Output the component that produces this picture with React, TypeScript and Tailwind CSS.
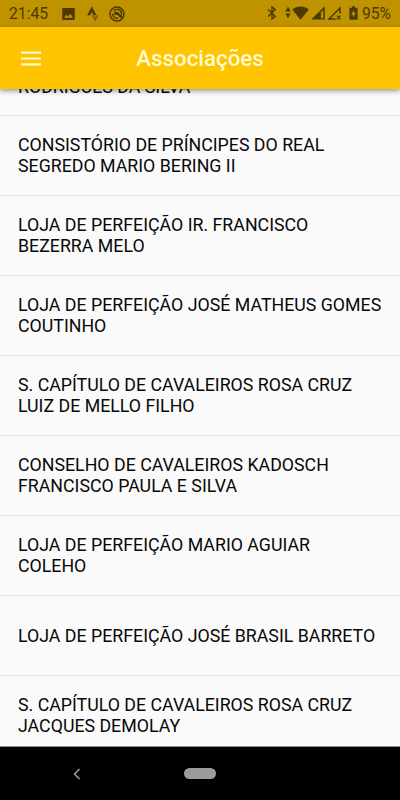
const items = [
  "CONSISTÓRIO DE PRÍNCIPES DO REAL\nSEGREDO MARIO BERING II",
  "LOJA DE PERFEIÇÃO IR. FRANCISCO\nBEZERRA MELO",
  "LOJA DE PERFEIÇÃO JOSÉ MATHEUS GOMES\nCOUTINHO",
  "S. CAPÍTULO DE CAVALEIROS ROSA CRUZ\nLUIZ DE MELLO FILHO",
  "CONSELHO DE CAVALEIROS KADOSCH\nFRANCISCO PAULA E SILVA",
  "LOJA DE PERFEIÇÃO MARIO AGUIAR\nCOLEHO",
  "LOJA DE PERFEIÇÃO JOSÉ BRASIL BARRETO",
  "S. CAPÍTULO DE CAVALEIROS ROSA CRUZ\nJACQUES DEMOLAY",
];

const StatusBar = () => (
  <div className="flex h-[27px] shrink-0 items-center justify-between bg-[#bf9200] px-[9px] text-[15.7px] leading-none text-[#4c3a00]">
    <div className="flex items-center">
      <span className="w-[53px] whitespace-nowrap">21:45</span>
      {/* Picture */}
      <svg className="h-[14px] w-[13px]" viewBox="0 0 13 14" fill="currentColor">
        <path
          fillRule="evenodd"
          d="M1.5 1h10A1.3 1.3 0 0 1 12.8 2.3v9.4A1.3 1.3 0 0 1 11.5 13h-10A1.3 1.3 0 0 1 .2 11.7V2.3A1.3 1.3 0 0 1 1.5 1zM2 10.7h9L8.2 6.8 6 9.6 4.4 7.7z"
        />
      </svg>
      {/* Strava */}
      <svg className="ml-3 h-4 w-3" viewBox="0 0 12 16" fill="currentColor">
        <path d="M4.8.3.2 9.2h2.9l1.7-3.3 1.8 3.3h2.8z" />
        <path
          d="M9.4 9.2 8 11.8 6.7 9.2H4.7L8 15.5l3.3-6.3z"
          opacity=".6"
        />
      </svg>
      <svg
        className="ml-[10px] h-4 w-4"
        viewBox="0 0 16 16"
        fill="none"
        stroke="currentColor"
      >
        <circle cx="8" cy="8" r="7" strokeWidth="1.5" />
        <path d="M11.9 10A4.3 4.3 0 0 0 4.6 5.3M3.7 7.6A4.3 4.3 0 0 0 9 12.2" strokeWidth="1.5" />
        <path
          d="M4.8 7.6 6.4 5.6l2.6.3 4.2 4.9-1.5 1.4-3.6-3.5-1.9.5z"
          fill="currentColor"
          stroke="none"
        />
      </svg>
    </div>
    <div className="flex items-center">
      {/* Bluetooth */}
      <svg
        className="h-[14px] w-[10px]"
        viewBox="0 0 10 14"
        fill="none"
        stroke="currentColor"
        strokeWidth="1.4"
      >
        <path d="M1.2 3.5 8.3 10.4 5 13V1l3.3 2.6-7.1 6.9" />
      </svg>
      {/* Data arrows */}
      <svg className="ml-2 h-[14px] w-[6px]" viewBox="0 0 6 14" fill="currentColor">
        <path d="M.4 5.4 3 .6l2.6 4.8zM.4 7.4 3 12.2l2.6-4.8z" />
      </svg>
      {/* Wifi */}
      <svg className="ml-px h-[14px] w-[17px]" viewBox="0 0 17 14" fill="currentColor">
        <path d="M.2 3.6C2.4 1.6 5.3.6 8.5.6s6.1 1 8.3 3L8.5 13.8z" />
      </svg>
      {/* Signal */}
      <svg className="ml-[2px] h-[14px] w-[14px]" viewBox="0 0 14 14" fill="currentColor">
        <path fillRule="evenodd" d="M13.8.3v13.3H.2zM9.9 12.2h2.4V4L9.9 6.3z" />
      </svg>
      {/* Signal without data */}
      <svg
        className="ml-[2px] h-[14px] w-[15px]"
        viewBox="0 0 15 14"
        fill="none"
        stroke="currentColor"
        strokeWidth="1.5"
      >
        <path d="M13 7.6V2L2 12.9h6.5" />
        <path d="m9.9 9.6 3.6 3.8m0-3.8-3.6 3.8" strokeWidth="1.3" />
      </svg>
      {/* Battery */}
      <svg className="ml-[7px] h-[14px] w-[9px]" viewBox="0 0 9 14" fill="currentColor">
        <path
          fillRule="evenodd"
          d="M3 .3h3v1.4h1.6c.6 0 1 .4 1 1v10c0 .6-.4 1-1 1H1.4c-.6 0-1-.4-1-1v-10c0-.6.4-1 1-1H3zM5 4 2.1 8.4h1.8v3.2L6.9 7H5z"
        />
      </svg>
      <span className="ml-1 whitespace-nowrap">95%</span>
    </div>
  </div>
);

const Header = () => (
  <header className="relative z-10 flex h-[62px] shrink-0 items-center justify-center bg-[#ffc300] text-[#fffbd0] shadow-[0_2px_5px_rgba(0,0,0,0.4)]">
    <button className="absolute left-[21px] top-[24px]" aria-label="Menu">
      <svg className="h-[15px] w-5" viewBox="0 0 20 15" fill="currentColor">
        <path d="M0 .5h20v2.2H0zM0 6.4h20v2.2H0zM0 12.3h20v2.2H0z" />
      </svg>
    </button>
    <h1 className="pt-px text-[22.3px] font-medium leading-none">Associações</h1>
  </header>
);

const App = () => (
  <div className="flex h-[800px] w-[400px] flex-col overflow-hidden bg-[#fafafa] font-['Roboto',sans-serif]">
    <StatusBar />
    <Header />
    <ul className="min-h-0 flex-1 overflow-hidden text-[17.78px] leading-[21px] text-[#080808]">
      <li className="flex h-[27px] items-end overflow-hidden border-b border-[#e4e4e4] px-[18px] pb-[17px]">
        RODRIGUES DA SILVA
      </li>
      {items.map((item) => (
        <li
          key={item}
          className="flex h-20 items-center whitespace-pre border-b border-[#e4e4e4] px-[18px] pt-px"
        >
          {item}
        </li>
      ))}
    </ul>
    <nav className="relative z-10 flex h-[54px] shrink-0 items-center border-t border-[#8a8a8a] bg-black">
      <svg
        className="ml-[73px] h-[12px] w-[8px]"
        viewBox="0 0 8 12"
        fill="none"
        stroke="#9c9c9c"
        strokeWidth="1.6"
      >
        <path d="M6.5 1 1.5 6l5 5" />
      </svg>
      <div className="ml-[103px] h-[11px] w-8 rounded-full bg-[#9c9c9c]" />
    </nav>
  </div>
);

export default App;
